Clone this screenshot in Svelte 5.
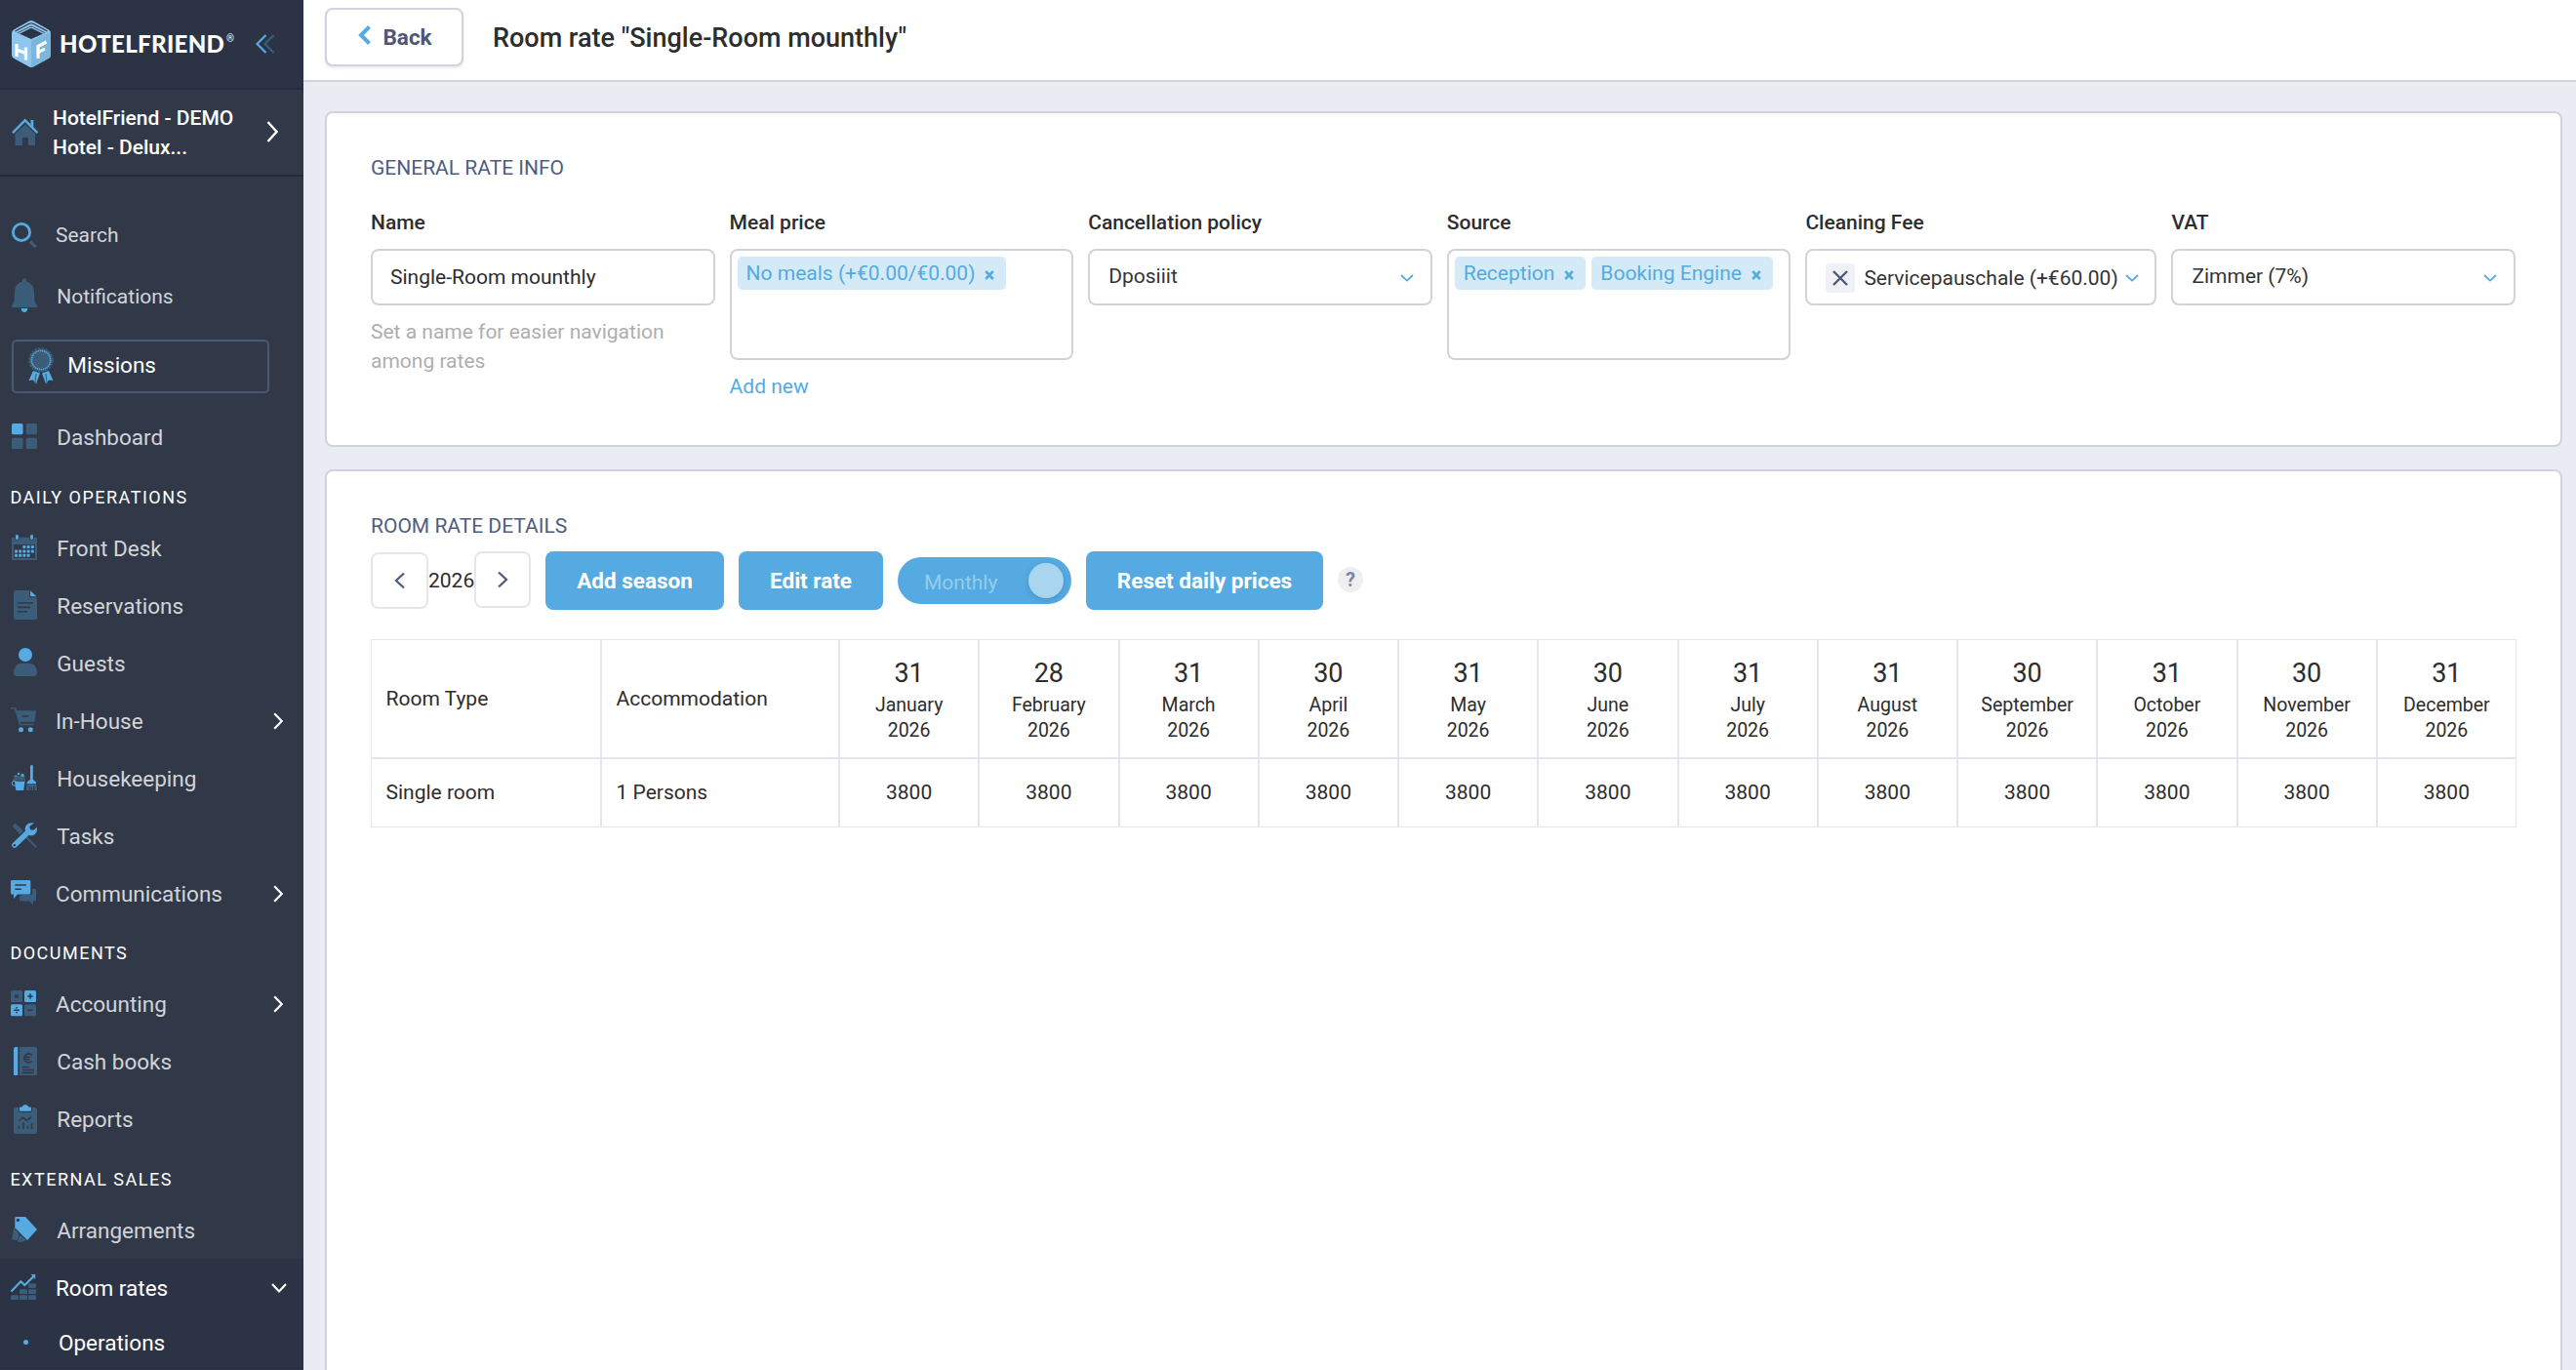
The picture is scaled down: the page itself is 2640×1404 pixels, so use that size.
<script>
	const groups = [
		{
			title: 'Daily operations',
			items: [
				{ icon: 'calendar', label: 'Front Desk' },
				{ icon: 'file', label: 'Reservations' },
				{ icon: 'user', label: 'Guests' },
				{ icon: 'cart', label: 'In-House', nested: true },
				{ icon: 'broom', label: 'Housekeeping' },
				{ icon: 'tools', label: 'Tasks' },
				{ icon: 'chat', label: 'Communications', nested: true }
			]
		},
		{
			title: 'Documents',
			items: [
				{ icon: 'calculator', label: 'Accounting', nested: true },
				{ icon: 'book', label: 'Cash books' },
				{ icon: 'clipboard', label: 'Reports' }
			]
		},
		{
			title: 'External sales',
			items: [
				{ icon: 'tag', label: 'Arrangements' },
				{ icon: 'growth', label: 'Room rates', nested: true, open: true, children: ['Operations'] }
			]
		}
	];

	const year = 2026;
	const months = [
		{ name: 'January', days: 31 },
		{ name: 'February', days: 28 },
		{ name: 'March', days: 31 },
		{ name: 'April', days: 30 },
		{ name: 'May', days: 31 },
		{ name: 'June', days: 30 },
		{ name: 'July', days: 31 },
		{ name: 'August', days: 31 },
		{ name: 'September', days: 30 },
		{ name: 'October', days: 31 },
		{ name: 'November', days: 30 },
		{ name: 'December', days: 31 }
	];
	const price = 3800;

	// calendar icon dots: [column, row]
	const dots = [
		[2, 0], [3, 0], [4, 0],
		[0, 1], [1, 1], [2, 1], [3, 1], [4, 1],
		[0, 2], [1, 2], [2, 2], [3, 2]
	];
	const bricks = [
		[0, 2], [1, 2], [2, 2],
		[1, 1], [2, 1],
		[2, 0]
	];
</script>

{#snippet icon(name)}
	<svg class="icon" viewBox="0 0 40 40">
		{#if name === 'search'}
			<circle cx="14" cy="18" r="8.6" class="line" />
			<path d="M23 27.5l5.8 5.6" class="line-dim" stroke-width="3.4" />
		{:else if name === 'bell'}
			<path class="dim" d="M17 2.2c1.4 0 2.2 1 2.2 2.2v1.4c4.8 1 7.5 4.6 7.7 9.700l.4 7.5c.1 3 .9 4.9 2.7 7.2V32H4v-1.800c1.800-2.300 2.600-4.200 2.700-7.200l.4-7.500c.2-5.100 2.900-8.700 7.700-9.700V4.400c0-1.200.8-2.200 2.200-2.200z" />
			<path class="lit" d="M13.700 33h6.600c0 2.500-1.400 4-3.300 4s-3.300-1.500-3.300-4z" />
		{:else if name === 'grid'}
			<rect class="lit" x="4" y="6" width="11.5" height="11.3" rx="1.5" />
			<rect class="dim" x="18.7" y="6" width="11.3" height="11.3" rx="1.5" />
			<rect class="dim" x="4" y="20.7" width="11.5" height="11.3" rx="1.5" />
			<rect class="dim" x="18.7" y="20.7" width="11.3" height="11.3" rx="1.5" />
		{:else if name === 'calendar'}
			<path class="dim" fill-rule="evenodd" d="M5 8.7h24a1 1 0 0 1 1 1V31a1 1 0 0 1-1 1H5a1 1 0 0 1-1-1V9.7a1 1 0 0 1 1-1zM6 16v14h22V16z" />
			<rect class="lit edge" x="7.5" y="5.5" width="3.8" height="6" rx="1.8" />
			<rect class="lit edge" x="22.6" y="5.5" width="3.8" height="6" rx="1.8" />
			{#each dots as [col, row]}
				<rect class="lit" x={7 + col * 4.2} y={17 + row * 4.4} width="3" height="3" rx=".5" />
			{/each}
		{:else if name === 'file'}
			<path class="dim" d="M8.5 4H22v5.5a2 2 0 0 0 2 2h6V31.5a2.500 2.500 0 0 1-2.500 2.500h-19A2.500 2.500 0 0 1 6 31.500v-25A2.500 2.500 0 0 1 8.500 4z" />
			<path class="lit" d="M23 4.300l6.400 6H24a1 1 0 0 1-1-1z" />
			<path class="cut" d="M10 17h16M10 21.400h13M10 25.700h10" />
		{:else if name === 'user'}
			<circle class="lit" cx="18" cy="11" r="7" />
			<path class="dim" d="M6 29.500c0-5.600 3.300-9.800 8-9.800h8c4.700 0 8 4.200 8 9.800 0 2.200-1.300 3.500-3.500 3.500h-17C7.300 33 6 31.700 6 29.500z" />
		{:else if name === 'cart'}
			<path class="line-dim" stroke-width="1.6" d="M3 6.800h4.500l5 16.700h14" />
			<path class="dim" d="M8.800 9.300H29l-1.300 10.500c-.1.600-.4.900-1 .9H12z" />
			<path class="cut" d="M14.800 15h6.500" />
			<circle class="lit" cx="13.5" cy="28.7" r="2.5" />
			<circle class="lit" cx="23.3" cy="28.7" r="2.5" />
		{:else if name === 'broom'}
			<rect class="lit" x="23" y="6" width="2.8" height="16" rx="1.2" />
			<path class="lit" d="M22.800 21h3.200l3 2.500v1.500h-9.300v-1.500z" />
			<path class="dim" d="M19.600 25.300h9.600L30 32H18.800z" />
			<path class="cut thin" d="M22.300 28v4M24.500 29v3M26.700 28v4" />
			<path class="dim" d="M5.800 17h12l-.8 3.300h1v1.500H5v-1.500h1.500z" />
			<path class="lit" d="M7 22.800h10.500L16.200 32H8.300z" />
			<circle class="line thin" cx="6.7" cy="24.8" r="2.4" />
			<circle class="lit" cx="11" cy="15" r="1.2" />
			<circle class="lit" cx="15" cy="16.3" r="1.5" />
			<circle class="lit" cx="8.3" cy="17" r=".8" />
		{:else if name === 'tools'}
			<path class="dim" d="M4.500 9.500l3-3 8.500 8-3.500 3.500z" />
			<path class="line-dim" stroke-width="2" d="M19 21l10 10" />
			<path class="line handle" d="M7 29l12.500-12" />
			<path class="lit" d="M26.800 6.500c-5.200-1.500-9.600 2-9.100 7.300l4 5.200c4.700 1.600 9.400-2.200 8-8.200l-3.300 2.900-3.400-.5-.8-3.300z" />
			<circle class="hole" cx="6.9" cy="29.2" r="1.2" />
		{:else if name === 'chat'}
			<path class="dim" d="M14 21h9.500a1.500 1.500 0 0 0 1.500-1.500V15h2.800c.8 0 1.200.5 1.200 1.200v10c0 .8-.5 1.200-1.200 1.200H26V31l-4.300-3.600h-8.500c-.8 0-1.200-.5-1.200-1.200v-4z" />
			<path class="lit" d="M4.500 6h17.400c.9 0 1.400.6 1.400 1.400V19c0 .9-.5 1.500-1.400 1.500H10L6 25v-4.500H4.500c-.9 0-1.500-.6-1.500-1.500V7.400C3 6.600 3.600 6 4.500 6z" />
			<path class="cut" d="M7.300 11h11.500M7.300 15.300h6.500" />
		{:else if name === 'calculator'}
			<rect class="dim" x="3" y="6" width="12" height="12" rx="1.5" />
			<rect class="lit" x="17" y="6" width="12" height="12" rx="1.5" />
			<rect class="lit" x="3" y="20.2" width="12" height="12" rx="1.5" />
			<rect class="dim" x="17" y="20.2" width="12" height="12" rx="1.5" />
			<path class="cut" d="M7.400 10.400l3.200 3.200M10.600 10.400l-3.200 3.200M20.300 12h5.400M23 9.300v5.400M6.300 26.200h5.400M20.300 26.200h5.400" />
			<circle class="hole" cx="9" cy="23.8" r=".9" />
			<circle class="hole" cx="9" cy="28.6" r=".9" />
		{:else if name === 'book'}
			<path class="lit" d="M8 5h2v29H6V7a2 2 0 0 1 2-2z" />
			<path class="dim" d="M10 5h18a2 2 0 0 1 2 2v25a2 2 0 0 1-2 2H10z" />
			<path class="cut thin" d="M11.500 5v29" />
			<path class="cut" d="M25 13.200c-3.700-3-7.800-.4-7.800 3.200s4.100 6.200 7.800 3M16 15.400h7M16 17.800h6.500M14.800 25.600h7M14.800 28.500h12M14.800 31.400h12" />
		{:else if name === 'clipboard'}
			<path class="dim" d="M8.500 8H11v3a2 2 0 0 0 2 2h10a2 2 0 0 0 2-2V8h2.500A2.500 2.500 0 0 1 30 10.500v22a2.500 2.500 0 0 1-2.500 2.500h-19A2.500 2.500 0 0 1 6 32.500v-22A2.500 2.500 0 0 1 8.500 8z" />
			<path class="lit" d="M13 7.500h1.500C15.500 6 16.500 5 18 5s2.500 1 3.500 2.500H23c.6 0 1 .4 1 1v2.200c0 .6-.4 1-1 1H13c-.6 0-1-.4-1-1V8.500c0-.6.4-1 1-1z" />
			<path class="cut" d="M11.500 21.500l4-3.300 4 3 4.500-3.400M11.500 27v3M16 23.500V30M20.500 27v3M24.500 24.500V30" />
		{:else if name === 'tag'}
			<path class="dim" d="M6.300 17.500l5.200 5.500-1.700 7-5.800-.8zM12.600 24.300l6.200 6-6.800 2-2.200-1z" />
			<path class="lit" d="M8.300 6H18l12 13-10 11L7.300 17.300V7a1 1 0 0 1 1-1z" />
			<circle class="hole" cx="10.4" cy="9.4" r="1.7" />
		{:else if name === 'growth'}
			<path class="line trend" d="M3.500 23.500l9.800-10.200 4 3.700 9-8.800" />
			<path class="lit" d="M23.600 6h4.600v5z" />
			{#each bricks as [col, row]}
				<rect class="dim" x={3 + col * 9} y={15.3 + row * 6} width="8" height="4.6" rx="1" />
			{/each}
		{/if}
	</svg>
{/snippet}

{#snippet caret()}
	<svg class="caret" viewBox="0 0 14 8"><path d="M1 1l6 5.600L13 1" /></svg>
{/snippet}

{#snippet tag(text)}
	<span class="chip">
		{text}
		<svg viewBox="0 0 10 10"><path d="M1.200 1l7.600 8M8.800 1L1.200 9" /></svg>
	</span>
{/snippet}

<div class="page">
	<aside class="sidebar">
		<div class="brand">
			<svg class="cube" viewBox="0 0 40 48">
				<path fill="#8ec6f0" d="M18 .6a4 4 0 0 1 4 0l16 8.800a4 4 0 0 1 2 3.400v22.400a4 4 0 0 1-2 3.500l-16 8.700a4 4 0 0 1-4 0L2 38.700a4 4 0 0 1-2-3.500V12.800a4 4 0 0 1 2-3.400z" />
				<path fill="#7bb6dc" d="M20 20.500l20-9v23.700a4 4 0 0 1-2 3.500l-16 8.700a4 4 0 0 1-2 .6z" />
				<path fill="#2b3344" d="M5.500 12.500L20 5.500l14.500 7L20 19z" />
				<path fill="none" stroke="#2b3344" stroke-width="1.100" d="M3.500 11L18 3.200q2-1 4 0L36.500 11" />
				<path fill="none" stroke="#8ec6f0" stroke-width="1.300" d="M6 13.800L18.500 7.600q1.500-.7 3 0L34 13.800" />
				<path fill="none" stroke="#fff" stroke-width="3.200" d="M5 24v13M14.500 27.500v13M5 30l9.500 3.600M27 39V26.500l8.500-4.500M27 32.600l7-3.500" />
			</svg>
			<span class="wordmark">HOTELFRIEND</span><span class="reg">®</span>
			<svg class="collapse" viewBox="0 0 20 20">
				<path stroke="#3b5d79" d="M18.500 1L9.500 10l9 9" />
				<path stroke="#55abe1" d="M10.500 1l-9 9 9 9" />
			</svg>
		</div>

		<div class="hotel">
			<svg class="home" viewBox="0 0 28 28">
				<path class="dim" d="M14 6.500L24 16v12h-7v-8h-6v8H3.500V16z" />
				<path class="line roof" d="M1 15.200L13.700 2.300l12.700 12.900" />
				<path class="lit" d="M19.500 2h2.800v8l-2.800-2.800z" />
			</svg>
			<div class="hotel-name">HotelFriend - DEMO<br />Hotel - Delux...</div>
			<svg class="hotel-arrow" viewBox="0 0 12 22"><path d="M1.500 1l9 10-9 10" /></svg>
		</div>

		<nav>
			<a class="item top search">{@render icon('search')}<span>Search</span></a>
			<a class="item top">{@render icon('bell')}<span>Notifications</span></a>

			<a class="missions">
				<svg viewBox="0 0 26 38">
					<path class="lit" d="M5 24L.5 34l4.500-.6L8 37.500l4-11zM21 24l4.500 10-4.500-.6-3 4.100-4-11z" />
					<path class="line-dim" stroke-width="1" d="M8 27l-1 10M18 27l1 10" />
					<circle class="dim" cx="13" cy="13" r="11.6" />
					<circle class="line-dim" cx="13" cy="13" r="12" stroke-width="1.6" stroke-dasharray="2.6 1.2" />
					<circle class="line ring" cx="13" cy="13" r="9.6" stroke-dasharray="1.3 .7" />
				</svg>
				<span>Missions</span>
			</a>

			<a class="item dashboard">{@render icon('grid')}<span>Dashboard</span></a>

			{#each groups as group}
				<h4>{group.title}</h4>
				{#each group.items as item}
					<a class="item" class:nested={item.nested} class:open={item.open}>
						{@render icon(item.icon)}
						<span>{item.label}</span>
						{#if item.open}
							<svg class="down" viewBox="0 0 16 10"><path d="M1 1l7 7.400L15 1" /></svg>
						{:else if item.nested}
							<svg class="right" viewBox="0 0 10 18"><path d="M1.200 1.200L8.800 9l-7.600 7.800" /></svg>
						{/if}
					</a>
					{#each item.children ?? [] as child}
						<a class="child"><i></i>{child}</a>
					{/each}
				{/each}
			{/each}
		</nav>
	</aside>

	<main>
		<header>
			<button class="back">
				<svg viewBox="0 0 14 20"><path d="M11.500 1.500L3 10l8.500 8.500" /></svg>
				<span>Back</span>
			</button>
			<h1>Room rate "Single-Room mounthly"</h1>
		</header>

		<section class="card general">
			<h2>General rate info</h2>
			<div class="fields">
				<div class="field">
					<label>Name</label>
					<div class="control">Single-Room mounthly</div>
					<p class="help">Set a name for easier navigation among rates</p>
				</div>
				<div class="field">
					<label>Meal price</label>
					<div class="control multi">{@render tag('No meals (+€0.00/€0.00)')}</div>
					<a class="add">Add new</a>
				</div>
				<div class="field">
					<label>Cancellation policy</label>
					<div class="control select"><span>Dposiiit</span>{@render caret()}</div>
				</div>
				<div class="field">
					<label>Source</label>
					<div class="control multi">
						{@render tag('Reception')}
						{@render tag('Booking Engine')}
					</div>
				</div>
				<div class="field wide">
					<label>Cleaning Fee</label>
					<div class="control select fee">
						<i class="clear"><svg viewBox="0 0 16 16"><path d="M1 1l14 14M15 1L1 15" /></svg></i>
						<span>Servicepauschale (+€60.00)</span>
						{@render caret()}
					</div>
				</div>
				<div class="field">
					<label>VAT</label>
					<div class="control select"><span>Zimmer (7%)</span>{@render caret()}</div>
				</div>
			</div>
		</section>

		<section class="card details">
			<h2>Room rate details</h2>
			<div class="toolbar">
				<button class="step prev" aria-label="Previous year">
					<svg viewBox="0 0 12 18"><path d="M10 1.500L2 9l8 7.500" /></svg>
				</button>
				<span class="year">{year}</span>
				<button class="step next" aria-label="Next year">
					<svg viewBox="0 0 12 18"><path d="M2 1.500L10 9l-8 7.500" /></svg>
				</button>
				<button class="primary season">Add season</button>
				<button class="primary edit">Edit rate</button>
				<div class="toggle"><span>Monthly</span><i></i></div>
				<button class="primary reset">Reset daily prices</button>
				<span class="hint">?</span>
			</div>

			<div class="table">
				<div class="cell head left">Room Type</div>
				<div class="cell head left">Accommodation</div>
				{#each months as month}
					<div class="cell head month">
						<b>{month.days}</b>
						<span>{month.name}</span>
						<span>{year}</span>
					</div>
				{/each}
				<div class="cell price left">Single room</div>
				<div class="cell price left">1 Persons</div>
				{#each months as month}
					<div class="cell price">{price}</div>
				{/each}
			</div>
		</section>
	</main>
</div>

<style>
	:global(body) {
		margin: 0;
		background: #e9ecf2;
	}

	* {
		box-sizing: border-box;
	}

	.page {
		display: flex;
		height: 1404px;
		overflow: hidden;
		font-family: Roboto, sans-serif;
		font-size: 21px;
		line-height: 30px;
		color: #2d2d2d;
	}

	svg {
		display: block;
		flex: none;
		fill: none;
	}

	button {
		font: inherit;
		padding: 0;
		margin: 0;
	}

	/* two-tone icon parts */
	.lit { fill: #55abe1; }
	.dim { fill: #3b5d79; }
	.hole { fill: #313949; }
	.line { fill: none; stroke: #55abe1; stroke-width: 2.8; }
	.line-dim { fill: none; stroke: #3b5d79; }
	.cut { fill: none; stroke: #313949; stroke-width: 1.6; }
	.handle { stroke-width: 5.6; stroke-linecap: round; }
	.roof { stroke-width: 2.4; }
	.trend { stroke-width: 2.2; }
	.ring { stroke-width: 1.6; }
	.thin { stroke-width: 1; }
	.edge { stroke: #313949; stroke-width: 1; }

	/* Sidebar */
	.sidebar {
		flex: none;
		width: 311px;
		background: #313949;
		color: #d1d4d8;
		overflow: hidden;
	}

	.brand {
		display: flex;
		height: 92px;
		padding-left: 12px;
		background: #2b3344;
		border-bottom: 2px solid #242b3b;
		align-items: center;
	}

	.cube {
		width: 40px;
		height: 48px;
	}

	.wordmark {
		width: 170px;
		margin-left: 9px;
		font-family: Lato, sans-serif;
		font-weight: 900;
		font-size: 24px;
		letter-spacing: 0.35px;
		color: #fff;
	}

	.reg {
		width: 9px;
		margin: -11px 0 0 1px;
		font-size: 10px;
		line-height: 10px;
		color: #fff;
	}

	.collapse {
		width: 20px;
		height: 20px;
		margin-left: 21px;
		stroke-width: 2.2;
	}

	.hotel {
		display: flex;
		height: 89px;
		padding: 14px 26px 0 12px;
		border-bottom: 2px solid #242b3b;
		color: #fff;
		font-weight: 500;
	}

	.home {
		width: 28px;
		height: 28px;
		margin-top: 15px;
	}

	.hotel-name {
		flex: 1;
		margin-left: 14px;
		white-space: nowrap;
	}

	.hotel-arrow {
		width: 12px;
		height: 22px;
		margin-top: 18px;
		stroke: #fff;
		stroke-width: 2.4;
	}

	nav {
		padding-top: 29px;
	}

	.item {
		display: flex;
		height: 59px;
		padding: 10px 0 0 8px;
		font-size: 22.5px;
	}

	.item span {
		flex: 1;
		margin: 5px 0 0 10.3px;
	}

	.item.nested span {
		margin-left: 9px;
	}

	.item.top {
		height: 63px;
		font-size: 21px;
	}

	.item.top span {
		margin-top: 6px;
	}

	.item.search span {
		margin-left: 9px;
	}

	.icon {
		width: 40px;
		height: 40px;
	}

	.right {
		width: 10px;
		height: 18px;
		margin: 11px 21px 0 0;
		stroke: #fff;
		stroke-width: 2.2;
	}

	.down {
		width: 16px;
		height: 10px;
		margin: 15px 17px 0 0;
		stroke: #fff;
		stroke-width: 2.2;
	}

	.missions {
		display: flex;
		width: 264px;
		height: 55px;
		margin: 12px 0 15px 12px;
		padding: 6px 0 0 15px;
		border: 2px solid #4b5872;
		border-radius: 5px;
		font-size: 22.5px;
		color: #fff;
	}

	.missions svg {
		width: 26px;
		height: 38px;
	}

	.missions span {
		margin: 3px 0 0 14.3px;
	}

	.dashboard {
		margin-bottom: 1px;
	}

	h4 {
		height: 54px;
		margin: 0;
		padding: 21px 0 0 10.4px;
		font-size: 18px;
		font-weight: 400;
		line-height: 21px;
		letter-spacing: 1.5px;
		text-transform: uppercase;
		color: #fff;
	}

	h4:last-of-type {
		height: 55px;
		padding-top: 22px;
	}

	.open,
	.child {
		background: #2b3344;
		color: #fff;
	}

	.child {
		display: flex;
		height: 54px;
		padding: 12px 0 0 24px;
		border-bottom: 1px solid #242b3b;
		font-size: 22.5px;
	}

	.child i {
		width: 5px;
		height: 5px;
		margin: 12px 31px 0 0;
		border-radius: 50%;
		background: #55abe1;
	}

	/* Main area */
	main {
		flex: 1;
		min-width: 0;
	}

	header {
		display: flex;
		height: 84px;
		padding: 8px 0 0 22px;
		background: #fff;
		border-bottom: 2px solid #d0d3dc;
	}

	.back {
		display: flex;
		align-items: center;
		width: 142px;
		height: 60px;
		padding: 0 0 4px 32px;
		background: #fff;
		border: 2px solid #d0d3dc;
		border-radius: 8px;
		box-shadow: 0 2px 3px rgba(40, 50, 80, 0.1);
		font-size: 22.5px;
		font-weight: 700;
		color: #4b5878;
	}

	.back svg {
		width: 14px;
		height: 20px;
		margin-right: 11.5px;
		stroke: #55abe1;
		stroke-width: 4;
	}

	.back span {
		margin-top: 3px;
	}

	h1 {
		margin: 16px 0 0 30px;
		font-size: 27px;
		font-weight: 500;
		line-height: 30px;
	}

	.card {
		margin: 0 14px 0 22px;
		padding: 41px 45px 0;
		background: #fff;
		border: 2px solid #d0d3dc;
		border-radius: 8px;
	}

	.general {
		height: 344px;
		margin-top: 30px;
	}

	.details {
		height: 940px;
		margin-top: 23px;
	}

	h2 {
		margin: 0;
		font-size: 21px;
		font-weight: 400;
		line-height: 30px;
		text-transform: uppercase;
		color: #4f5d7e;
	}

	.fields {
		display: flex;
		gap: 15px;
		margin: 26px 1px 0 0;
	}

	.field {
		flex: 1;
		min-width: 0;
	}

	.field.wide {
		flex: 0 0 360px;
	}

	.field label {
		display: block;
		margin-bottom: 12px;
		font-weight: 500;
	}

	.control {
		height: 58px;
		padding: 12px 18px;
		border: 2px solid #d0d3dc;
		border-radius: 8px;
		white-space: nowrap;
	}

	.control.multi {
		display: flex;
		gap: 6px;
		height: 114px;
		padding: 6px;
	}

	.control.select {
		display: flex;
		padding: 11px 17px 0 19px;
		color: #333;
	}

	.select span {
		flex: 1;
	}

	.control.fee {
		padding-right: 16px;
	}

	.fee span {
		margin: 2px 0 0 9px;
	}

	.caret {
		width: 14px;
		height: 8px;
		margin-top: 13px;
		stroke: #55abe1;
		stroke-width: 1.8;
	}

	.clear {
		display: flex;
		align-items: center;
		justify-content: center;
		width: 30px;
		height: 30px;
		margin-top: 2px;
		border-radius: 4px;
		background: #f0f1f6;
	}

	.clear svg {
		width: 16px;
		height: 16px;
		stroke: #4b5878;
		stroke-width: 2.4;
	}

	.chip {
		display: flex;
		height: 34px;
		padding: 2px 12px 0 9px;
		border-radius: 5px;
		background: #d4eaf7;
		color: #55abe1;
	}

	.chip svg {
		width: 10px;
		height: 10px;
		margin: 12px 0 0 10px;
		stroke: #55abe1;
		stroke-width: 2.6;
	}

	.help {
		margin: 12px 0 0;
		color: #aeaeae;
	}

	.add {
		display: block;
		margin-top: 12px;
		color: #55abe1;
	}

	.toolbar {
		display: flex;
		height: 60px;
		margin-top: 11px;
	}

	.step {
		display: flex;
		align-items: center;
		justify-content: center;
		width: 58px;
		height: 58px;
		background: #fff;
		border: 2px solid #e4e6ee;
		border-radius: 8px;
	}

	.step svg {
		width: 12px;
		height: 18px;
		stroke: #4f5d7e;
		stroke-width: 2.3;
	}

	.prev {
		width: 59px;
		margin-top: 1px;
	}

	.year {
		width: 47px;
		margin-top: 15px;
	}

	.primary {
		height: 60px;
		margin-left: 15px;
		padding-bottom: 1px;
		border: 0;
		border-radius: 8px;
		background: #55abe1;
		color: #fff;
		font-size: 22.5px;
		font-weight: 700;
	}

	.season { width: 183px; }
	.edit { width: 148px; }
	.reset { width: 243px; }

	.toggle {
		display: flex;
		justify-content: space-between;
		width: 178px;
		height: 48px;
		margin: 6px 0 0 15px;
		padding: 6px 8px 0 27px;
		border-radius: 24px;
		background: #55abe1;
	}

	.toggle span {
		margin-top: 5px;
		color: #94cdee;
		font-size: 21px;
	}

	.toggle i {
		width: 36px;
		height: 36px;
		border-radius: 50%;
		background: #a9d5ee;
		box-shadow: 0 2px 6px rgba(30, 80, 130, 0.25);
	}

	.hint {
		width: 26px;
		height: 26px;
		margin: 16px 0 0 15px;
		border-radius: 50%;
		background: #efeff2;
		color: #7c86a3;
		font-size: 20px;
		font-weight: 700;
		line-height: 26px;
		text-align: center;
	}

	.table {
		display: grid;
		grid-template-columns: 236px 244px repeat(12, 1fr);
		grid-template-rows: 122px 71px;
		margin-top: 30px;
	}

	.cell {
		display: flex;
		align-items: center;
		justify-content: center;
		border: 1px solid #e4e6ee;
	}

	.cell.left {
		justify-content: flex-start;
		padding-left: 14.5px;
	}

	.cell.price {
		padding-bottom: 2px;
	}

	.cell.month {
		flex-direction: column;
		align-items: center;
		justify-content: flex-start;
		padding-top: 17px;
		font-size: 19.5px;
		line-height: 26px;
	}

	.month b {
		margin-bottom: 3px;
		font-size: 27px;
		font-weight: 400;
		line-height: 34px;
	}
</style>
